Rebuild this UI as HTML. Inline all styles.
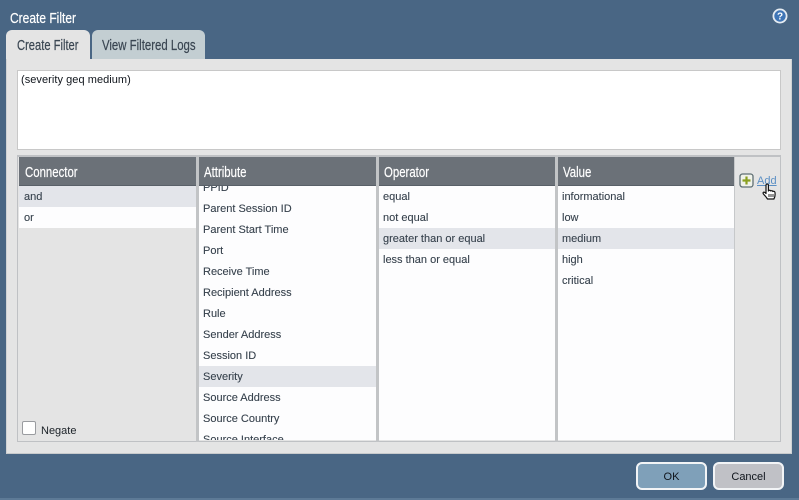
<!DOCTYPE html>
<html><head><meta charset="utf-8">
<style>
html,body{margin:0;padding:0;}
body{width:799px;height:500px;position:relative;overflow:hidden;background:#496684;font-family:"Liberation Sans",sans-serif;}
div,span{position:absolute;box-sizing:border-box;white-space:nowrap;}
.nar{font-size:15px;line-height:18px;-webkit-text-stroke:.2px currentColor;}
.sq{transform:scaleX(.76);transform-origin:0 0;}
.col{top:157px;height:283px;overflow:hidden;background:#fdfdfe;}
.hd{left:0;top:0;right:0;height:29px;background:#6b7178;border-bottom:1px solid #596068;color:#fff;z-index:2;}
.hd span{left:6px;top:7px;}
.r{left:0;right:0;height:21px;font-size:11px;line-height:23px;padding-left:4px;color:#36414c;background:#fdfdfe;-webkit-text-stroke:.1px currentColor;}
.sel{background:#e3e5ea;}
.sep{background:#c2c4c6;top:155px;height:287px;width:3px;}
</style></head>
<body>
<div class="nar sq" style="left:10px;top:10px;color:#fff;transform:scaleX(.8);">Create Filter</div>
<svg style="position:absolute;left:772px;top:8px" width="16" height="16" viewBox="0 0 16 16"><circle cx="8" cy="8" r="6.600" fill="#3f75b6" stroke="#e6ecf2" stroke-width="1.800"/><text x="8" y="11.500" font-size="10" font-weight="bold" font-family="Liberation Sans" text-anchor="middle" fill="#fff">?</text></svg>

<div style="left:6px;top:30px;width:84px;height:30px;background:#e4e4e4;border-radius:6px 6px 0 0;"></div>
<div class="nar sq" style="left:17px;top:37px;color:#3a4652;transform:scaleX(.745);">Create Filter</div>
<div style="left:92px;top:30px;width:113px;height:29px;background:#c3ced2;border-radius:6px 6px 0 0;"></div>
<div class="nar sq" style="left:102px;top:37px;color:#3a4652;">View Filtered Logs</div>

<div style="left:6px;top:59px;width:786px;height:395px;background:#e4e4e4;border:1px solid #d0d2d4;border-top:0;border-bottom:1px solid #c8cacc;"></div>
<div style="left:17px;top:70px;width:764px;height:80px;background:#fff;border:1px solid #c8c8c8;"></div>
<div style="left:21px;top:74px;font-size:11px;line-height:13px;color:#10151c;letter-spacing:.05px;">(severity geq medium)</div>

<div style="left:17px;top:155px;width:764px;height:287px;background:#e4e4e4;border:1px solid #bfc1c4;border-top:2px solid #bfc1c4;"></div>

<div class="col" style="left:19px;width:177px;background:#e4e4e4;">
  <div class="hd nar"><span class="sq">Connector</span></div>
  <div class="r sel" style="top:29px;padding-left:5px;">and</div>
  <div class="r" style="top:50px;padding-left:5px;">or</div>
</div>
<div class="sep" style="left:196px;"></div>
<div style="left:22px;top:421px;width:14px;height:14px;background:#fff;border:1px solid #9a9ca0;border-radius:2px;"></div>
<div style="left:41px;top:424px;font-size:11px;line-height:14px;color:#1c2228;">Negate</div>

<div class="col" style="left:199px;width:177px;">
  <div class="hd nar"><span class="sq" style="left:5px">Attribute</span></div>
  <div class="r" style="top:20px;">PPID</div>
  <div class="r" style="top:41px;">Parent Session ID</div>
  <div class="r" style="top:62px;">Parent Start Time</div>
  <div class="r" style="top:83px;">Port</div>
  <div class="r" style="top:104px;">Receive Time</div>
  <div class="r" style="top:125px;">Recipient Address</div>
  <div class="r" style="top:146px;">Rule</div>
  <div class="r" style="top:167px;">Sender Address</div>
  <div class="r" style="top:188px;">Session ID</div>
  <div class="r sel" style="top:209px;">Severity</div>
  <div class="r" style="top:230px;">Source Address</div>
  <div class="r" style="top:251px;">Source Country</div>
  <div class="r" style="top:272px;">Source Interface</div>
</div>
<div class="sep" style="left:376px;"></div>

<div class="col" style="left:379px;width:176px;">
  <div class="hd nar"><span class="sq" style="left:5px">Operator</span></div>
  <div class="r" style="top:29px;">equal</div>
  <div class="r" style="top:50px;">not equal</div>
  <div class="r sel" style="top:71px;">greater than or equal</div>
  <div class="r" style="top:92px;">less than or equal</div>
</div>
<div class="sep" style="left:555px;"></div>

<div class="col" style="left:558px;width:176px;">
  <div class="hd nar"><span class="sq" style="left:5px">Value</span></div>
  <div class="r" style="top:29px;">informational</div>
  <div class="r" style="top:50px;">low</div>
  <div class="r sel" style="top:71px;">medium</div>
  <div class="r" style="top:92px;">high</div>
  <div class="r" style="top:113px;">critical</div>
</div>
<div style="left:734px;top:157px;width:1px;height:283px;background:#c6c8ca;"></div>

<svg style="position:absolute;left:739px;top:173px" width="16" height="15" viewBox="0 0 16 15"><rect x="1" y="1" width="13" height="13" rx="2.500" fill="#f0f2ea" stroke="#5f6f73" stroke-width="1.300"/><path d="M7.500 3.500v8M3.500 7.500h8" stroke="#8aa020" stroke-width="2.200" fill="none"/></svg>
<div style="left:757px;top:175px;font-size:11px;line-height:13px;color:#5b8fc4;text-decoration:underline;">Add</div>
<svg style="position:absolute;left:761px;top:183px" width="18" height="19" viewBox="0 0 18 19"><path d="M5 2.200c0-1.500 2.400-1.500 2.400 0V8l.4-.4c.6-.6 1.800-.3 2 .4.600-.6 1.800-.3 2 .5.700-.5 1.900-.2 2.100.7.200.6.200 1 .2 2.300 0 2-.4 3.200-1.200 4.500H6.500C5.500 14.500 4.400 13 3 11.700 1.800 10.500 1.800 9.500 2.600 9.200c.7-.2 1.600.4 2.400 1.300z" fill="#fff" stroke="#111" stroke-width="1.200" stroke-linejoin="round"/><path d="M8 11v3M10 11v3M12 11v3" stroke="#111" stroke-width=".9"/></svg>

<div style="left:636px;top:462px;width:71px;height:28px;background:#7fa0b9;border:2px solid #f2f4f6;border-radius:6px;font-size:11px;line-height:27px;text-align:center;color:#10151c;">OK</div>
<div style="left:713px;top:462px;width:71px;height:28px;background:#c0c1c6;border:2px solid #f2f4f6;border-radius:6px;font-size:11px;line-height:27px;text-align:center;color:#10151c;">Cancel</div>
<div style="left:0;top:498px;width:799px;height:2px;background:#5d7a96;"></div>
</body></html>
